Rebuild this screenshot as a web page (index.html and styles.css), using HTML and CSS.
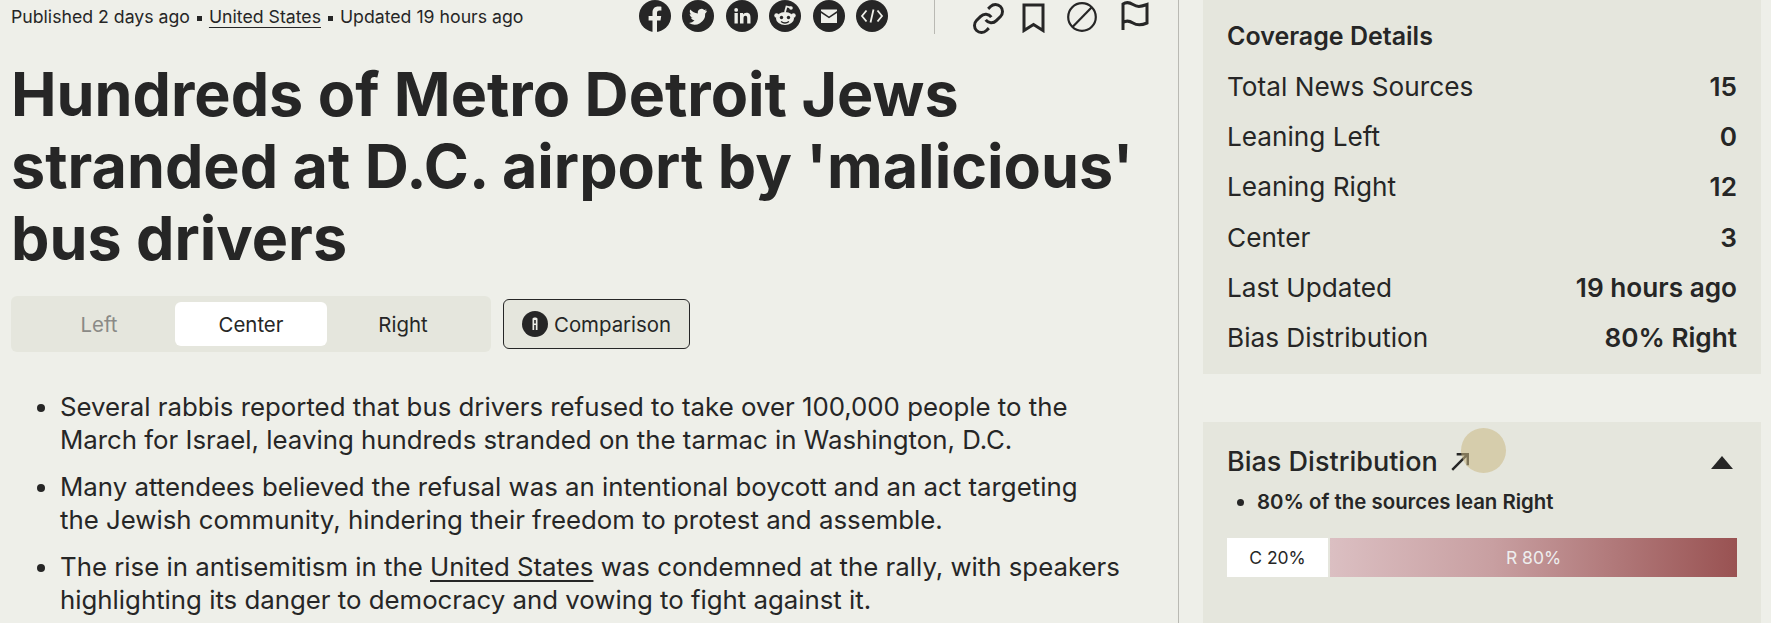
FILE: index.html
```html
<!DOCTYPE html>
<html lang="en">

<head>
    <meta charset="UTF-8">
    <meta name="viewport" content="width=device-width, initial-scale=1.0">
    <title>Hundreds of Metro Detroit Jews stranded</title>
    <link rel="stylesheet" href="styles.css">
</head>

<body>
    <div class="page">
        <main class="article">
            <div class="top_bar">
                <p class="meta">Published 2 days ago <span class="sep"></span> <a href="#">United States</a> <span class="sep"></span> Updated 19 hours ago</p>
                <div class="share">
                    <svg class="social" viewBox="0 0 32 32"><circle cx="16" cy="16" r="16"/><path class="cut" d="M13.500 32V20.500H9.600V16h3.900v-3.400c0-3.900 2.300-6 5.800-6 1.700 0 3.100.2 3.100.2v3.800h-1.900c-1.900 0-2.500 1.200-2.500 2.400V16h4.200l-.7 4.500h-3.500V32z"/></svg>
                    <svg class="social" viewBox="0 0 32 32"><circle cx="16" cy="16" r="16"/><path class="cut" d="M25 10.600c-.7.3-1.400.5-2.100.6.8-.5 1.300-1.200 1.600-2-.7.4-1.500.7-2.300.9a3.700 3.700 0 0 0-6.300 3.400c-3-.2-5.700-1.600-7.600-3.900-1 1.700-.5 3.900 1.100 4.900-.6 0-1.200-.2-1.700-.5 0 1.800 1.300 3.300 3 3.700-.5.1-1.100.2-1.700.1.500 1.500 1.900 2.500 3.500 2.600A7.500 7.500 0 0 1 7 22.900a10.500 10.500 0 0 0 16.200-9.300c.7-.5 1.300-1.200 1.800-3z"/></svg>
                    <svg class="social" viewBox="0 0 32 32"><circle cx="16" cy="16" r="16"/><path class="cut" d="M8.500 13h3.300v10.500H8.500zM10.150 8a1.900 1.900 0 1 1 0 3.800 1.900 1.900 0 0 1 0-3.800zM14 13h3.100v1.500c.5-.9 1.600-1.800 3.300-1.800 3.400 0 4.100 2.200 4.100 5.200v5.600h-3.300v-5c0-1.200 0-2.800-1.700-2.800s-2 1.300-2 2.700v5.100H14z"/></svg>
                    <svg class="social" viewBox="0 0 32 32"><circle cx="16" cy="16" r="16"/><ellipse class="cut" cx="16" cy="18.500" rx="9" ry="6.500"/><circle class="cut" cx="7.500" cy="15.500" r="2.200"/><circle class="cut" cx="24.500" cy="15.500" r="2.200"/><circle class="cut" cx="22" cy="8" r="1.800"/><path class="line_cut" d="M16 12l1.500-5.500 4.500 1.200"/><circle cx="12.500" cy="17.500" r="1.700"/><circle cx="19.500" cy="17.500" r="1.700"/><path class="line_dark" d="M12 21.500c2.500 1.800 5.500 1.800 8 0"/></svg>
                    <svg class="social" viewBox="0 0 32 32"><circle cx="16" cy="16" r="16"/><path class="cut" d="M8 9.500h16v1.600l-8 5.400-8-5.400zM8 13l8 5.300 8-5.300v10H8z"/></svg>
                    <svg class="social" viewBox="0 0 32 32"><circle cx="16" cy="16" r="16"/><path class="line_cut" d="M10.500 10.500L6 16l4.500 5.500M21.500 10.500L26 16l-4.500 5.500M17.500 9.500l-3 13"/></svg>
                    <span class="divider"></span>
                    <svg class="tool tool_link" viewBox="1 1 22 22"><path d="M10 13a5 5 0 0 0 7.540.54l3-3a5 5 0 0 0-7.070-7.070l-1.720 1.710"/><path d="M14 11a5 5 0 0 0-7.540-.54l-3 3a5 5 0 0 0 7.070 7.070l1.710-1.710"/></svg>
                    <svg class="tool tool_book" viewBox="0 0 23 30"><path d="M2 2h19v25.500l-9.500-6-9.500 6z"/></svg>
                    <svg class="tool tool_block" viewBox="0 0 30 30"><circle cx="15" cy="15" r="13.800"/><path d="M5.500 25L25 5"/></svg>
                    <svg class="tool tool_flag" viewBox="0 0 28 30"><path d="M2 29V3c3-2 6-2 10 .5s7 2.500 14 0V22c-6 2.500-10 2.500-14 0s-7-2.500-10-.5"/></svg>
                </div>
            </div>

            <h1>Hundreds of Metro Detroit Jews stranded at D.C. airport by 'malicious' bus drivers</h1>

            <div class="tabs_row">
                <div class="tabs">
                    <span class="tab tab_off">Left</span>
                    <span class="tab tab_on">Center</span>
                    <span class="tab">Right</span>
                </div>
                <div class="compare">
                    <svg class="compare_icon" viewBox="0 0 26 26"><circle cx="13" cy="13" r="13"/><path class="cut" d="M10.500 8c0-1 1-1.500 2.500-1.500s2.500.5 2.500 1.500v11h-1.700v-5h-1.600v5h-1.700zM12.200 9v3.500h1.600V9z"/></svg>
                    Comparison
                </div>
            </div>

            <ul class="summary">
                <li>Several rabbis reported that bus drivers refused to take over 100,000 people to the March for Israel, leaving hundreds stranded on the tarmac in Washington, D.C.</li>
                <li>Many attendees believed the refusal was an intentional boycott and an act targeting the Jewish community, hindering their freedom to protest and assemble.</li>
                <li>The rise in antisemitism in the <a href="#">United States</a> was condemned at the rally, with speakers highlighting its danger to democracy and vowing to fight against it.</li>
            </ul>
        </main>

        <aside class="side">
            <section class="panel coverage">
                <h2>Coverage Details</h2>
                <div class="row"><span>Total News Sources</span><b>15</b></div>
                <div class="row"><span>Leaning Left</span><b>0</b></div>
                <div class="row"><span>Leaning Right</span><b>12</b></div>
                <div class="row"><span>Center</span><b>3</b></div>
                <div class="row"><span>Last Updated</span><b>19 hours ago</b></div>
                <div class="row"><span>Bias Distribution</span><b>80% Right</b></div>
            </section>

            <section class="panel bias">
                <div class="bias_head">
                    <h3>Bias Distribution</h3>
                    <svg class="arrow" viewBox="0 0 18 18"><path d="M2 16L16 2M6 2h10v10"/></svg>
                    <span class="cursor_dot"></span>
                    <span class="caret"></span>
                </div>
                <ul class="bias_list">
                    <li>80% of the sources lean Right</li>
                </ul>
                <div class="bar">
                    <div class="bar_c">C 20%</div>
                    <div class="bar_r">R 80%</div>
                </div>
            </section>
        </aside>
    </div>
</body>

</html>
```

FILE: styles.css
```css
* {
    padding: 0;
    margin: 0;
    box-sizing: border-box;
}

html,
body {
    height: 100%;
    overflow: hidden;
}

body {
    background: #eeefe9;
    color: #262626;
    font-family: Inter, "Liberation Sans", sans-serif;
}

a {
    color: inherit;
    text-decoration: underline;
    text-underline-offset: 4px;
}

.page {
    display: flex;
    height: 623px;
}

.article {
    width: 1179px;
    flex-shrink: 0;
    height: 100%;
    overflow: hidden;
    padding: 0 40px 0 11px;
    border-right: 1px solid #b9b9b3;
}

.top_bar {
    display: flex;
    justify-content: space-between;
    height: 36px;
}

.meta {
    font-size: 17.7px;
    line-height: 34px;
}

.sep {
    display: inline-block;
    width: 5px;
    height: 5px;
    margin: 0 2px;
    background: #262626;
    vertical-align: 2px;
}

.share {
    display: flex;
    align-items: flex-start;
    flex-shrink: 0;
    width: 511px;
    margin-right: -12px;
}

.social {
    flex-shrink: 0;
    width: 32px;
    height: 32px;
    margin-right: 11.4px;
    fill: #262626;
}

.cut {
    fill: #eeefe9;
}

.line_cut {
    fill: none;
    stroke: #eeefe9;
    stroke-width: 1.8;
}

.line_dark {
    fill: none;
    stroke: #262626;
    stroke-width: 1.4;
}

.divider {
    flex-shrink: 0;
    width: 1px;
    height: 34px;
    margin: 0 38px 0 35px;
    background: #b9b9b3;
}

.tool {
    flex-shrink: 0;
    fill: none;
    stroke: #262626;
    stroke-width: 3;
    height: 30px;
    margin-top: 3px;
    margin-right: 18px;
}

.tool_link {
    width: 31px;
    height: 31px;
    stroke-width: 2.1;
}

.tool_book {
    width: 23px;
    margin-right: 22px;
}

.tool_block {
    width: 30px;
    margin-top: 2px;
    margin-right: 24px;
    stroke-width: 2.2;
}

.tool_flag {
    width: 28px;
    margin-top: 1px;
    margin-right: 0;
}

h1 {
    margin-top: 22px;
    margin-right: -20px;
    font-size: 61px;
    font-weight: 700;
    line-height: 72px;
}

.tabs_row {
    display: flex;
    align-items: center;
    gap: 12px;
    margin-top: 22px;
    height: 56px;
}

.tabs {
    display: flex;
    width: 480px;
    height: 56px;
    padding: 6px 9px 6px 12px;
    border-radius: 6px;
    background: #e5e6dd;
}

.tab {
    width: 152px;
    font-size: 20.4px;
    line-height: 45px;
    text-align: center;
    border-radius: 6px;
}

.tab_off {
    color: #8a8a86;
}

.tab_on {
    background: #fff;
}

.compare {
    display: flex;
    align-items: center;
    gap: 6px;
    width: 187px;
    height: 50px;
    padding-left: 18px;
    font-size: 20.4px;
    background: #e5e6dd;
    border: 1px solid #262626;
    border-radius: 6px;
}

.compare_icon {
    width: 26px;
    height: 26px;
    fill: #262626;
}

.summary {
    margin-top: 38px;
    margin-right: 17px;
    padding-left: 49px;
    font-size: 25.8px;
    line-height: 33px;
}

.summary li {
    margin-bottom: 14px;
}

.side {
    flex: 1;
    padding: 0 10px 0 24px;
}

.panel {
    background: #e5e6dd;
}

.coverage {
    height: 374px;
    padding: 18px 24px 0;
}

h2 {
    margin-bottom: 15px;
    font-size: 25px;
    font-weight: 600;
    line-height: 36px;
}

.row {
    display: flex;
    justify-content: space-between;
    margin-top: 14.2px;
    font-size: 26.2px;
    line-height: 36px;
}

.row b {
    font-weight: 600;
}

.bias {
    height: 300px;
    margin-top: 48px;
    padding: 0 24px;
}

.bias_head {
    position: relative;
    display: flex;
    align-items: center;
    height: 60px;
    padding-top: 20px;
}

h3 {
    font-size: 27px;
    font-weight: 500;
    line-height: 40px;
}

.arrow {
    width: 20px;
    height: 20px;
    margin-left: 12px;
    fill: none;
    stroke: #262626;
    stroke-width: 2.2;
}

.cursor_dot {
    position: absolute;
    left: 234px;
    top: 6px;
    width: 45px;
    height: 45px;
    border-radius: 50%;
    background: rgba(203, 184, 131, 0.55);
}

.caret {
    margin-left: auto;
    width: 0;
    height: 0;
    margin-right: 4px;
    border-left: 11.5px solid transparent;
    border-right: 11.5px solid transparent;
    border-bottom: 13px solid #262626;
}

.bias_list {
    margin-top: 5px;
    padding-left: 30px;
    font-size: 20.4px;
    font-weight: 600;
    line-height: 30px;
}

.bar {
    display: flex;
    gap: 2px;
    height: 39px;
    margin-top: 21px;
    font-size: 17.5px;
    line-height: 39px;
    text-align: center;
}

.bar_c {
    width: 101px;
    background: #fff;
}

.bar_r {
    flex: 1;
    color: #eee;
    background: linear-gradient(90deg, #dbbfc2, #c89fa1 40%, #995252);
}
```
